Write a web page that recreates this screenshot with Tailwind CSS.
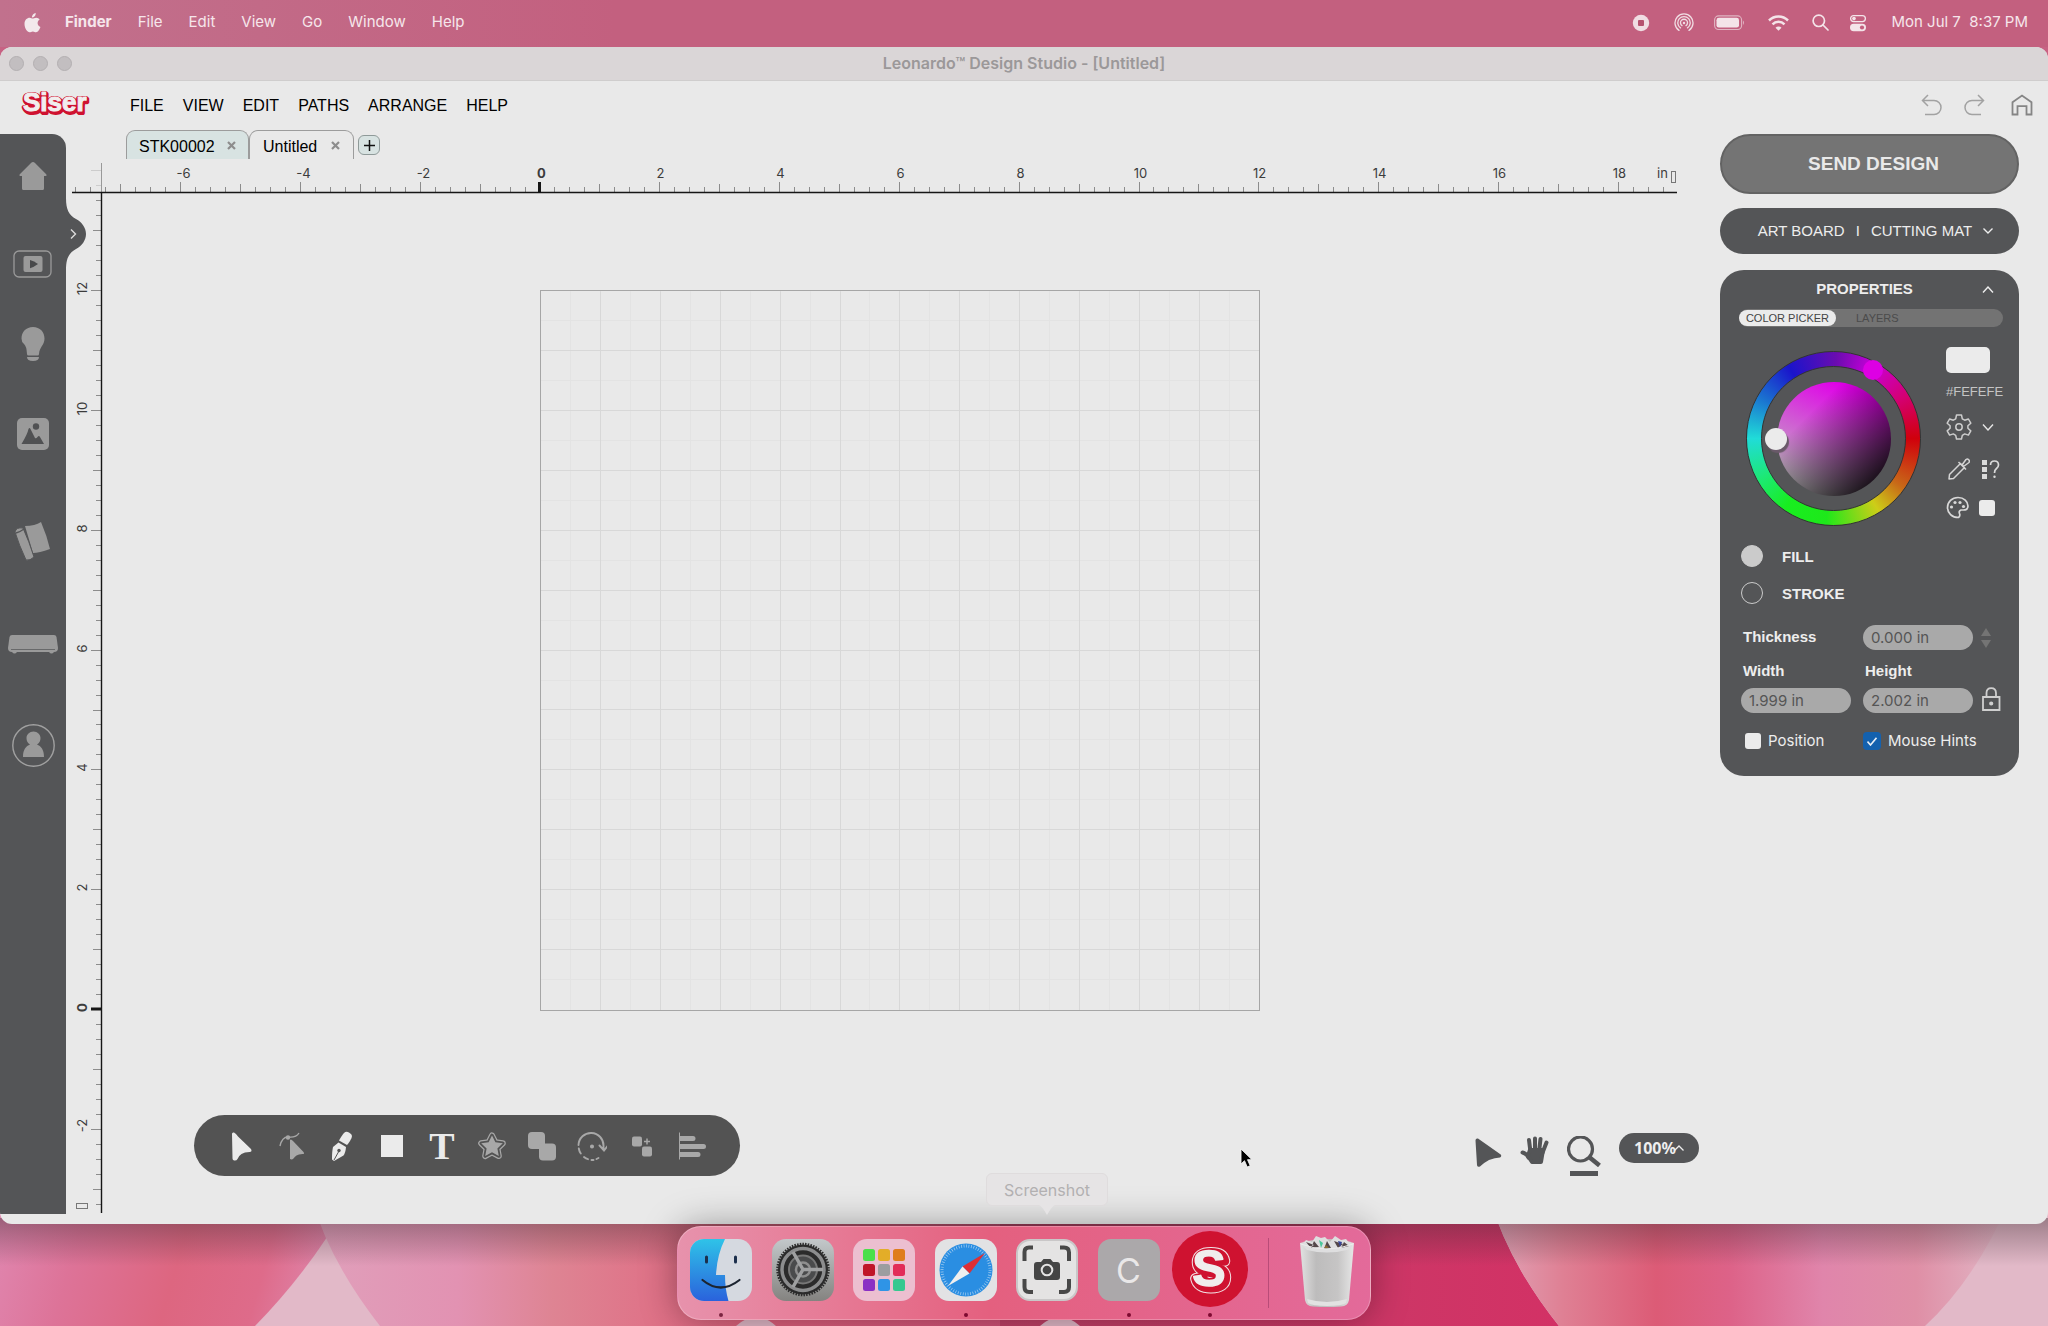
<!DOCTYPE html>
<html lang="en">
<head>
    <meta charset="UTF-8">
    <meta name="viewport" content="width=device-width, initial-scale=1.0">
    <title>Leonardo Design Studio - [Untitled]</title>
    <script src="https://cdn.jsdelivr.net/npm/@tailwindcss/browser@4"></script>
</head>
<body class="relative flex h-screen flex-col overflow-hidden bg-[#cf3365] font-['Liberation_Sans',Arial,sans-serif] text-black">

    <!-- Wallpaper -->
    <svg class="absolute inset-0 h-full w-full" viewBox="0 0 2048 1326" preserveAspectRatio="none" aria-hidden="true">
        <defs>
            <linearGradient id="petalLeft" x1="0" x2="1" y1="0" y2="0.1">
                <stop offset="0" stop-color="#e087b0"/><stop offset=".25" stop-color="#dd7398"/>
                <stop offset=".55" stop-color="#dd6680"/><stop offset=".8" stop-color="#de6b8a"/><stop offset="1" stop-color="#df88ae"/>
            </linearGradient>
            <linearGradient id="petalMid" x1="0" x2="1" y1="0" y2="0">
                <stop offset="0" stop-color="#e0a0bb"/><stop offset=".2" stop-color="#e292b2"/><stop offset=".33" stop-color="#de8493"/>
                <stop offset=".6" stop-color="#e0627d"/><stop offset="1" stop-color="#d05078"/>
            </linearGradient>
            <linearGradient id="petalRight" x1="0" x2="1" y1="0" y2="0">
                <stop offset="0" stop-color="#e0a5b8"/><stop offset=".14" stop-color="#df8094"/><stop offset=".32" stop-color="#dc5b76"/>
                <stop offset=".46" stop-color="#dd6288"/><stop offset=".64" stop-color="#e085ab"/><stop offset=".82" stop-color="#df8fa6"/><stop offset="1" stop-color="#e2b9c8"/>
            </linearGradient>
            <linearGradient id="deep" x1="0" x2="1" y1="0" y2="0">
                <stop offset="0" stop-color="#c04268"/><stop offset="1" stop-color="#d43065"/>
            </linearGradient>
            <linearGradient id="windowShade" x1="0" x2="0" y1="0" y2="1">
                <stop offset="0" stop-color="#3c2a30" stop-opacity=".42"/><stop offset="1" stop-color="#3c2a30" stop-opacity="0"/>
            </linearGradient>
        </defs>
        <rect y="1200" width="600" height="126" fill="#e2b9c8"/>
        <path d="M0 1200H350Q310 1270 255 1326H0Z" fill="url(#petalLeft)"/>
        <path d="M312 1200Q330 1262 380 1326H1040V1200Z" fill="url(#petalMid)"/>
        <rect x="1000" y="1200" width="600" height="126" fill="url(#deep)"/>
        <path d="M736 1326q20-18 40 0zM1040 1326q20-18 40 0z" fill="#e2b9c8"/>
        <path d="M1490 1200Q1510 1265 1559 1326H2048V1200Z" fill="#e2b9c8"/>
        <path d="M1490 1200Q1510 1265 1559 1326H1925Q1975 1280 2010 1200Z" fill="url(#petalRight)"/>
        <rect y="1218" width="2048" height="48" fill="url(#windowShade)"/>
        <rect width="2048" height="80" fill="#c76283"/>
    </svg>

    <!-- Menu bar -->
    <header class="relative flex h-[47px] shrink-0 items-center bg-linear-to-r from-[#c1718d] via-[#c3607f] via-30% to-[#c3607f] pr-5 pl-6 pb-0.5 font-[Inter,sans-serif] text-[15px] text-[#f6e6eb]">
        <svg class="mr-6 h-5 w-[17px]" viewBox="0 0 17 20" fill="#f3e9ec" aria-label="Apple"><path d="M11.7 0c.2 1.400-.4 2.500-1.100 3.300-.8.900-1.700 1.400-2.700 1.300-.1-1.200.4-2.300 1.100-3.100C9.700.7 10.800.1 11.700 0zM8.600 5.600c.8 0 1.900-.9 3.600-.9 1.500 0 2.800.8 3.500 1.900-3.100 1.900-2.600 6.100.7 7.400-.8 2.300-2.400 5.200-4.300 5.200-1.300 0-1.700-.8-3.300-.8-1.500 0-2 .8-3.200.8C3.300 19.200.5 15.200.5 10.900c0-4 2.600-6.200 5.200-6.200 1.400 0 2.300.9 2.900.9z"/></svg>
        <nav class="flex gap-[26px]">
            <a href="#" class="font-bold">Finder</a>
            <a href="#">File</a>
            <a href="#">Edit</a>
            <a href="#">View</a>
            <a href="#">Go</a>
            <a href="#">Window</a>
            <a href="#">Help</a>
        </nav>
        <div class="ml-auto flex items-center">
            <svg class="mr-6 h-[18px] w-[18px]" viewBox="0 0 18 18"><circle cx="9" cy="9" r="8.200" fill="#f0dde3"/><rect x="6" y="6" width="6" height="6" rx="1" fill="#b5526f"/></svg>
            <svg class="mr-5 h-5 w-5" viewBox="0 0 20 20" fill="none" stroke="#f0dde3" stroke-width="1.300" stroke-linecap="round"><path d="M5 17.400a9 9 0 1 1 10 0M6.500 14.900a6.200 6.200 0 1 1 7 0M8 12.600a3.500 3.500 0 1 1 4 0"/><circle cx="10" cy="10" r="1.200" fill="#f0dde3" stroke="none"/></svg>
            <svg class="mr-[23px] h-4 w-[31px]" viewBox="0 0 31 16"><rect x=".6" y=".9" width="27" height="13.600" rx="4" fill="none" stroke="#e0b4c2" stroke-width="1.100"/><rect x="2.500" y="2.800" width="22.500" height="9.800" rx="2.400" fill="#f4e4e9"/><path d="M29 5.500q2 2.200 0 4.400z" fill="#e0b4c2"/></svg>
            <svg class="mr-[23px] h-4 w-[21px]" viewBox="0 0 21 16" fill="none" stroke="#f4e4e9" stroke-width="2.500"><path d="M1 5.500a13.500 13.500 0 0 1 19 0M4.500 9.300a8.500 8.500 0 0 1 12 0"/><path d="M10.500 15.800l-3-3.100a4.200 4.200 0 0 1 6 0z" fill="#f4e4e9" stroke="none"/></svg>
            <svg class="mr-5 h-[17px] w-[17px]" viewBox="0 0 17 17" fill="none" stroke="#f4e4e9" stroke-width="1.700" stroke-linecap="round"><circle cx="6.800" cy="6.800" r="5.700"/><path d="M11 11l5 5"/></svg>
            <svg class="mr-6 h-[18px] w-[18px]" viewBox="0 0 18 18"><rect x="1.600" y="1.600" width="14.800" height="6" rx="3" fill="none" stroke="#f4e4e9" stroke-width="1.300"/><circle cx="5" cy="4.600" r="1.800" fill="#f4e4e9"/><rect x="1" y="9.800" width="16" height="7.400" rx="3.700" fill="#f4e4e9"/><circle cx="13" cy="13.500" r="2.100" fill="#c3607f"/></svg>
            <span class="whitespace-pre">Mon Jul 7  8:37 PM</span>
        </div>
    </header>

    <!-- Application window -->
    <main class="relative mb-[102px] flex min-h-0 flex-1 flex-col overflow-hidden rounded-xl bg-[#e9e9e9]">
        <div class="relative flex h-[34px] shrink-0 items-center justify-center border-b border-[#cfcdcd] bg-[#dad6d7]">
            <div class="absolute left-[9px] flex gap-[9px]">
                <span class="h-[15px] w-[15px] rounded-full border border-[#b3afb1] bg-[#c2bec0]"></span>
                <span class="h-[15px] w-[15px] rounded-full border border-[#b3afb1] bg-[#c2bec0]"></span>
                <span class="h-[15px] w-[15px] rounded-full border border-[#b3afb1] bg-[#c2bec0]"></span>
            </div>
            <h1 class="pb-0.5 font-[Inter,sans-serif] text-[16px] font-semibold text-[#9b9899]">Leonardo™ Design Studio - [Untitled]</h1>
        </div>

        <div class="flex h-[49px] shrink-0 items-center pr-[15px] pl-[18px]">
            <svg class="mb-1.5 h-8 w-[76px]" viewBox="0 0 76 32" font-family="Liberation Sans, Arial, sans-serif" font-weight="bold" font-size="26" stroke-linejoin="round">
                <g fill="#cf1230" stroke="#cf1230" stroke-width="4"><text x="6" y="26">Siser</text><text x="5" y="25">Siser</text></g>
                <text x="5" y="24" fill="#f1eeee" stroke="#f1eeee" stroke-width="1">Siser</text>
            </svg>
            <nav class="ml-9 flex gap-[19px] text-[16px]">
                <a href="#">FILE</a>
                <a href="#">VIEW</a>
                <a href="#">EDIT</a>
                <a href="#">PATHS</a>
                <a href="#">ARRANGE</a>
                <a href="#">HELP</a>
            </nav>
            <div class="mb-0.5 ml-auto flex items-center">
                <button aria-label="Undo" class="mr-5"><svg class="h-[22px] w-[22px]" viewBox="0 0 22 22" fill="none" stroke="#a2a2a2" stroke-width="1.500"><path d="M7 1L1.500 6.500 7 12M1.500 6.500H13a7 7 0 0 1 0 14H4"/></svg></button>
                <button aria-label="Redo" class="mr-[26px]"><svg class="h-[22px] w-[22px]" viewBox="0 0 22 22" fill="none" stroke="#a2a2a2" stroke-width="1.500"><path d="M15 1l5.500 5.500L15 12M20.500 6.500H9a7 7 0 0 0 0 14h9"/></svg></button>
                <button aria-label="Home"><svg class="h-[22px] w-[22px]" viewBox="0 0 22 22" fill="none" stroke="#858585" stroke-width="1.800"><path d="M1.500 8.300L11 1.500l9.500 6.800v12.200h-5v-8.300h-9v8.300h-5z"/></svg></button>
            </div>
        </div>

        <div class="flex min-h-0 flex-1">
            <!-- Left sidebar -->
            <aside class="relative mt-1 mb-[10px] flex w-[66px] shrink-0 flex-col items-center rounded-tr-[14px] bg-[#545557] pt-[28px]">
                <svg class="absolute top-[64px] left-[65px] h-[72px] w-[22px]" viewBox="0 0 22 72"><path d="M0 0H1C1 12 4 17 11 21C17 24 21 30 21 36C21 42 17 48 11 51C4 55 1 60 1 72H0Z" fill="#545557"/></svg>
                <button aria-label="Expand panel" class="absolute top-[94px] left-[69px]"><svg class="h-3 w-2" viewBox="0 0 8 12" fill="none" stroke="#dcdcdc" stroke-width="1.400"><path d="M2 1.500L6.500 6 2 10.500"/></svg></button>
                <button aria-label="Home"><svg class="h-7 w-7" viewBox="0 0 28 28" fill="#9a9a9a"><path d="M14 0q1 0 2 1l11 11q1.500 2-.5 2H25v12.500q0 1.500-1.500 1.500h-19Q3 28 3 26.500V14H1.500q-2 0-.5-2L12 1q1-1 2-1z"/></svg></button>
                <button aria-label="Videos" class="mt-[60px]"><svg class="h-7 w-10" viewBox="0 0 40 28"><rect x="1" y="1" width="37" height="26" rx="5" fill="none" stroke="#9a9a9a" stroke-width="1.300"/><rect x="10.500" y="6" width="19" height="16" rx="2" fill="#9a9a9a"/><path d="M17 10q4 1 8 4-4 3-8 4.200z" fill="#48494b"/></svg></button>
                <button aria-label="Ideas" class="mt-[49px]"><svg class="h-[34px] w-6" viewBox="0 0 24 34" fill="#9a9a9a"><path d="M12 0c7 0 11.500 5 11.500 11.500 0 7-5 8-5.500 15.500q0 1.500-1.500 1.500h-9Q6 28.500 6 27 5.500 19 3 17 .5 15 .5 11.500C.5 5 5 0 12 0zM6 30h12q0 4-6 4t-6-4z"/></svg></button>
                <button aria-label="Images" class="mt-[57px]"><svg class="h-8 w-8" viewBox="0 0 32 32"><rect width="32" height="32" rx="5" fill="#9a9a9a"/><path d="M4.500 26q6-10 7-15 1-2 2 0l4.500 9q1 1 2.500-1t2.500 0l4 7z" fill="#505153"/><circle cx="19" cy="8.500" r="3.200" fill="#505153"/></svg></button>
                <button aria-label="Materials" class="mt-[71px]"><svg class="h-10 w-9" viewBox="0 0 36 40"><path d="M10 5Q20 5 26 1q6 14 9 27-11 4-17 4z" fill="#9a9a9a"/><path d="M0 11Q1 6 8 7q6 13 11 29-4 4-8 3Q4 24 0 11z" fill="#9a9a9a" stroke="#545557"/><path d="M1 12q4-1 8-4" fill="none" stroke="#545557" stroke-width="1.300"/></svg></button>
                <button aria-label="Machine" class="mt-[74px]"><svg class="h-5 w-[50px]" viewBox="0 0 50 20"><path d="M4 0h42q2 0 2.500 2L50 13q0 4-4 4H4q-4 0-4-4L1.500 2Q2 0 4 0z" fill="#9a9a9a"/><path d="M3 14.500h44" stroke="#68696a"/><path d="M4 17h5q-2.500 3-5 0zm37 0h5q-2.500 3-5 0z" fill="#9a9a9a"/></svg></button>
                <button aria-label="Account" class="mt-[69px]"><svg class="h-[43px] w-[43px]" viewBox="0 0 43 43"><circle cx="21.500" cy="21.500" r="20.700" fill="none" stroke="#a0a0a0" stroke-width="1.400"/><path d="M21.500 7.500c4 0 7 3 7 6.500 0 3-1 5-3.500 6.500 4 1.500 7 5 7 12.500H11c0-7.500 3-11 7-12.500-2.500-1.500-3.500-3.500-3.500-6.500 0-3.500 3-6.500 7-6.500z" fill="#9a9a9a"/></svg></button>
            </aside>

            <!-- Workspace -->
            <section class="relative flex min-w-0 flex-1 flex-col">
                <div class="flex h-[29px] shrink-0 pl-[60px] text-[16px]">
                    <button class="flex w-[123px] items-center rounded-t-[9px] border border-b-0 border-[#9c9c9c] bg-[#d8e3e2] pt-1 pl-3">STK00002<svg class="mb-1 ml-3 h-[9px] w-[9px]" viewBox="0 0 9 9" stroke="#8d8d8d" stroke-width="2.200"><path d="M1 1l7 7M8 1L1 8"/></svg></button>
                    <button class="flex w-[105px] items-center rounded-t-[9px] border border-b-0 border-[#9c9c9c] pt-1 pl-[13px]">Untitled<svg class="mb-1 ml-[14px] h-[9px] w-[9px]" viewBox="0 0 9 9" stroke="#8d8d8d" stroke-width="2.200"><path d="M1 1l7 7M8 1L1 8"/></svg></button>
                    <button aria-label="New tab" class="mt-[5px] ml-1 flex h-5 w-[22px] items-center justify-center rounded-md border border-[#8f9a99] bg-[#d8e3e2]"><svg class="h-[11px] w-[11px]" viewBox="0 0 11 11" stroke="#111" stroke-width="1.500"><path d="M5.500 0v11M0 5.500h11"/></svg></button>
                </div>

                <svg id="canvas" class="min-h-0 w-full flex-1 font-[Inter,sans-serif] text-[13px]"></svg>

                <!-- Floating tools -->
                <div class="absolute right-[21px] bottom-[48px] left-[128px] flex items-end justify-between">
                    <div class="flex h-[61px] items-center gap-5 rounded-full bg-[#535353] px-[33px]">
                        <button aria-label="Select"><svg class="h-[30px] w-[30px]" viewBox="0 0 30 30" fill="#ebebeb"><path d="M5 3q0-2 2-1.500 2 1 4 4L24 18q1.500 3-1.500 3-5 0-8 2-3 2-4 5-1 2-3.500 1.500-1.500-.5-1.500-2z"/></svg></button>
                        <button aria-label="Edit nodes"><svg class="h-[30px] w-[30px]" viewBox="0 0 30 30"><path d="M3 15Q5 6 11 6q8 1 11-4" fill="none" stroke="#a8a8a8" stroke-width="1.400"/><circle cx="11" cy="6.500" r="2.200" fill="#a8a8a8"/><path d="M13 9q1-1.500 3 1l10.500 11q1.500 2-1 2-4 0-6 1.500t-3 3Q15 29 13 28z" fill="#a8a8a8"/></svg></button>
                        <button aria-label="Pen"><svg class="h-[30px] w-[30px]" viewBox="0 0 30 30"><path d="M17 2q2-2 5-.5T25 5q0 2-2 5t-3 4l-8-4.500Q15 4 17 2z" fill="#ebebeb"/><path d="M11.500 11.500l7.500 4.500q-.5 6-2.500 8.500L7 30l-2-1.500Q5 20 6 16z" fill="#ebebeb"/><path d="M7 29l5-9" stroke="#535353"/><circle cx="12" cy="19.500" r="1.700" fill="#535353"/></svg></button>
                        <button aria-label="Rectangle"><svg class="h-[30px] w-[30px]" viewBox="0 0 30 30"><rect x="4" y="4" width="22" height="22" fill="#ebebeb"/></svg></button>
                        <button aria-label="Text" class="h-[30px] w-[30px] text-center font-['Liberation_Serif',serif] text-[38px] leading-[30px] font-bold text-[#ebebeb]">T</button>
                        <button aria-label="Shapes"><svg class="h-[30px] w-[30px]" viewBox="0 0 30 30" stroke-linejoin="round"><path d="M15 4.500l3.400 6.800 7.400 1-5.400 5.200 1.400 7.500-6.800-3.700-6.800 3.700 1.400-7.500-5.400-5.200 7.400-1z" fill="#a8a8a8" stroke="#a8a8a8" stroke-width="6"/><path d="M15 4.500l3.400 6.800 7.400 1-5.400 5.200 1.400 7.500-6.800-3.700-6.800 3.700 1.400-7.500-5.400-5.200 7.400-1z" fill="#a8a8a8" stroke="#535353" stroke-width="3.600"/><path d="M15 4.500l3.400 6.800 7.400 1-5.400 5.200 1.400 7.500-6.800-3.700-6.800 3.700 1.400-7.500-5.400-5.200 7.400-1z" fill="#a8a8a8"/></svg></button>
                        <button aria-label="Combine"><svg class="h-[30px] w-[30px]" viewBox="0 0 30 30" fill="#a8a8a8"><rect x="1" y="1" width="17" height="17" rx="4"/><rect x="12" y="12.500" width="17" height="17" rx="4"/></svg></button>
                        <button aria-label="Rotate"><svg class="h-[30px] w-[30px]" viewBox="0 0 30 30" fill="none" stroke="#a8a8a8" stroke-width="1.900" stroke-linecap="round"><path d="M1.500 14A12.500 12.500 0 0 1 26.500 15v4M22.500 14.500l4.500 5 4-5"/><path d="M1.800 17.500q.5 3 2 5M7 26q2 1.700 4 2.200M14.500 29h2M19.500 28l2-1"/><circle cx="15" cy="15.500" r="1.100" fill="#a8a8a8"/></svg></button>
                        <button aria-label="Duplicate"><svg class="h-[30px] w-[30px]" viewBox="0 0 30 30" fill="#a8a8a8"><rect x="5" y="5.500" width="10" height="10" rx="2"/><rect x="15" y="15.500" width="10" height="10" rx="2"/><path d="M20 7.500v6M17 10.500h6" stroke="#a8a8a8" stroke-width="1.500"/></svg></button>
                        <button aria-label="Align"><svg class="h-[30px] w-[30px]" viewBox="0 0 30 30" fill="#a8a8a8"><path d="M2 1.500h1v27H2z"/><path d="M3 5h13q2.500 0 2.500 2.500T16 10H3zm0 8h23.500q2.500 0 2.500 2.500T26.500 18H3zm0 8h18q2.500 0 2.500 2.500T21 26H3z"/></svg></button>
                    </div>
                    <div class="flex items-start gap-[18px]">
                        <button aria-label="Pointer"><svg class="mt-[5px] h-[29px] w-[27px]" viewBox="0 0 27 29" fill="#545557"><path d="M.5 2.500Q.5 0 3 .5L25 16q2.500 1.500 0 3.500-5 0-11 2.500Q10 24 5 28.500q-3 1-3-1.500z"/></svg></button>
                        <button aria-label="Pan"><svg class="mt-[3px] h-[29px] w-[29px]" viewBox="0 0 29 29" fill="none" stroke="#545557" stroke-width="4" stroke-linecap="round" stroke-linejoin="round"><path d="M9 4l1.500 12M15 2.500V16M20.500 3L19 16M26.500 6.500L22 18M2.500 16.500q4 1 6 5" /><path d="M10 14h13l-2 12H12L8 20z" fill="#545557"/></svg></button>
                        <button aria-label="Zoom" class="flex flex-col items-center gap-1"><svg class="mt-[3px] h-[31px] w-[34px]" viewBox="0 0 34 31" fill="none" stroke="#545557"><circle cx="13.500" cy="13" r="12" stroke-width="3.200"/><path d="M21.500 20.500l11 9" stroke-width="4.500"/></svg><span class="h-[5px] w-7 bg-[#545557]"></span></button>
                        <button class="flex h-[30px] w-20 items-center justify-center rounded-full bg-[#545557] font-['Noto_Sans',sans-serif] text-[16px] font-bold text-[#eeeeee]">100%<svg class="-ml-0.5 h-[6px] w-[10px]" viewBox="0 0 10 6" fill="none" stroke="#eee" stroke-width="1.300"><path d="M.5 5.500L5 1l4.500 4.500"/></svg></button>
                    </div>
                </div>
            </section>

            <!-- Right panel -->
            <aside class="mt-1 mr-[29px] flex w-[299px] shrink-0 flex-col text-[15px] text-[#ededed]">
                <button class="h-[60px] rounded-full border-2 border-[#636363] bg-[#747474] pl-2 text-[19px] font-bold text-[#e9e9e9]">SEND DESIGN</button>
                <button class="mt-[14px] flex h-[46px] items-center justify-center gap-[11px] rounded-full bg-[#545557] pl-3"><span>ART BOARD</span><span>I</span><span>CUTTING MAT</span><svg class="h-[6px] w-[10px]" viewBox="0 0 10 6" fill="none" stroke="#eee" stroke-width="1.400"><path d="M.5 .5L5 5 9.500.5"/></svg></button>

                <div class="mt-4 rounded-[24px] bg-[#545557] pb-7 pl-[19px]">
                    <div class="flex h-[39px] items-center pr-[25px]">
                        <h2 class="flex-1 pl-2 text-center font-bold">PROPERTIES</h2>
                        <button aria-label="Collapse"><svg class="h-[7px] w-3" viewBox="0 0 12 7" fill="none" stroke="#eee" stroke-width="1.400"><path d="M1 6.500L6 1l5 5.500"/></svg></button>
                    </div>
                    <div class="mr-4 flex h-[18px] items-center rounded-full bg-[#737373] text-[11px]">
                        <button class="h-4 w-[97px] rounded-full bg-[#ebebeb] leading-4 text-[#444]">COLOR PICKER</button>
                        <button class="ml-5 text-[#4b4b4b]">LAYERS</button>
                    </div>

                    <div class="mt-5 flex">
                        <div class="relative mt-1 ml-[7px] h-[175px] w-[175px] shrink-0 rounded-full border border-[#333] bg-[conic-gradient(from_90deg,#d0000c_0deg,#c86818_35deg,#cdcd18_58deg,#1ee81a_95deg,#18ee20_125deg,#1de878_152deg,#20dcd8_180deg,#1a70d0_210deg,#1a14cc_238deg,#6a0cb0_272deg,#c800d8_298deg,#d40070_330deg,#d0000c_360deg)] p-[14px]">
                            <div class="flex h-full w-full items-center justify-center rounded-full border border-[#333] bg-[#545557]">
                                <div class="h-[114px] w-[114px] rounded-full bg-[linear-gradient(135deg,#0000_28%,#000d_86%),linear-gradient(205deg,#e000e8_15%,#c0b4c0_85%)]"></div>
                            </div>
                            <span class="absolute top-2 left-[116px] h-5 w-5 rounded-full bg-[#dd00e4]"></span>
                            <span class="absolute top-[76px] left-[18px] h-[22px] w-[22px] rounded-full bg-[#ebebeb] shadow-[2px_3px_1px_#6a5a6a]"></span>
                        </div>
                        <div class="ml-[25px]">
                            <div class="h-[26px] w-11 rounded-[5px] bg-[#ebebeb]"></div>
                            <p class="mt-[11px] h-4 text-[13px] leading-4 text-[#c4c4c4]">#FEFEFE</p>
                            <div class="mt-[14px] flex items-center gap-[10px]">
                                <button aria-label="Settings"><svg class="h-[26px] w-[26px]" viewBox="0 0 26 26" fill="none" stroke="#cdcdcd" stroke-width="1.500" stroke-linejoin="round"><path d="M10.500 1h5l.8 3.800 2.400 1.400 3.700-1.200 2.400 4.200-2.900 2.600v2.500l2.900 2.600-2.400 4.200-3.700-1.200-2.400 1.400-.8 3.700h-5l-.8-3.700-2.400-1.400-3.700 1.200-2.400-4.200 2.900-2.600v-2.500L1.200 9.200 3.600 5l3.700 1.200 2.400-1.400z"/><circle cx="13" cy="13" r="3.200"/></svg></button>
                                <svg class="h-[7px] w-3" viewBox="0 0 12 7" fill="none" stroke="#e5e5e5" stroke-width="1.400"><path d="M1 .5L6 6l5-5.500"/></svg>
                            </div>
                            <div class="mt-[18px] flex items-center gap-3 pl-0.5">
                                <button aria-label="Eyedropper"><svg class="h-[22px] w-[22px]" viewBox="0 0 22 22" fill="none" stroke="#d5d5d5" stroke-width="1.500" stroke-linejoin="round"><path d="M1 21l.5-4.500L12.500 5.500l4 4L5.500 20.500zM10.500 4l7.500 7.500M14 7l4-5.500q1.500-1 2.700.2T21 4.500L15.500 8.500"/></svg></button>
                                <svg class="h-[19px] w-[18px]" viewBox="0 0 18 19" fill="#dadada"><path d="M0 0h5v5H0zm0 7h5v5H0zm0 7h5v5H0z"/><path d="M8.500 5Q8.500 1 12.500 1t4 4q0 2-2 3.500T12.500 13" fill="none" stroke="#dadada" stroke-width="1.700"/><circle cx="12.500" cy="16.700" r="1.200"/></svg>
                            </div>
                            <div class="mt-4 flex items-center gap-[10px]">
                                <button aria-label="Palette"><svg class="h-[23px] w-[23px]" viewBox="0 0 23 23" fill="none" stroke="#d8d8d8" stroke-width="1.700"><path d="M12 1.500C18 1.500 22 5.500 22 10q0 4-4.500 4H15q-2.500 1-1.500 3.500t-1 4C6 21.500 1.500 17 1.500 11.500S6 1.500 12 1.500z"/><g fill="#d8d8d8" stroke="none"><circle cx="9" cy="6.500" r="1.600"/><circle cx="14" cy="6.500" r="1.600"/><circle cx="5.500" cy="11" r="1.600"/><circle cx="17.500" cy="10.500" r="1.600"/></g></svg></button>
                                <button aria-label="Swatch" class="h-4 w-4 rounded-[3px] bg-[#ebebeb]"></button>
                            </div>
                        </div>
                    </div>

                    <div class="mt-[19px] flex flex-col gap-[15px] pl-0.5 font-bold">
                        <label class="flex h-[22px] items-center gap-[19px]"><input type="radio" name="paint" checked class="h-[22px] w-[22px] appearance-none rounded-full border border-[#cbcbcb] checked:bg-[#cbcbcb]"><span class="pt-0.5">FILL</span></label>
                        <label class="flex h-[22px] items-center gap-[19px]"><input type="radio" name="paint" class="h-[22px] w-[22px] appearance-none rounded-full border border-[#cbcbcb] checked:bg-[#cbcbcb]"><span class="pt-0.5">STROKE</span></label>
                    </div>

                    <div class="mt-[21px] grid grid-cols-[122px_118px_1fr] items-center pl-0.5">
                        <label for="thickness" class="pl-0.5 font-bold">Thickness</label>
                        <input id="thickness" type="text" value="0.000 in" class="h-[25px] w-[110px] rounded-full bg-[#a9a9a9] pl-2 font-[Inter,sans-serif] text-[#555]">
                        <svg class="h-5 w-3" viewBox="0 0 12 20" fill="#747474"><path d="M5 0l5 8H0zM5 20l5-8H0z"/></svg>

                        <label for="width" class="mt-[11px] h-5 pl-0.5 leading-5 font-bold">Width</label>
                        <label for="height" class="col-span-2 mt-[11px] h-5 pl-0.5 leading-5 font-bold">Height</label>

                        <input id="width" type="text" value="1.999 in" class="mt-[7px] h-[25px] w-[110px] rounded-full bg-[#a9a9a9] pl-2 font-[Inter,sans-serif] text-[#555]">
                        <input id="height" type="text" value="2.002 in" class="mt-[7px] h-[25px] w-[110px] rounded-full bg-[#a9a9a9] pl-2 font-[Inter,sans-serif] text-[#555]">
                        <button aria-label="Lock ratio"><svg class="mt-1 h-6 w-5" viewBox="0 0 20 24" fill="none" stroke="#cfcfcf" stroke-width="1.800"><path d="M2 10h16.500v13H2zM5.500 10V6q0-4.800 4.700-4.800T15 6v4"/><circle cx="10.200" cy="16.500" r="1.200" fill="#cfcfcf"/></svg></button>
                    </div>

                    <div class="mt-[17px] grid h-[18px] grid-cols-[122px_1fr] items-center pl-0.5 font-[Inter,sans-serif]">
                        <label class="flex items-center gap-[7px] pl-1"><input type="checkbox" class="h-4 w-4 appearance-none rounded-[3px] bg-[#ebebeb]">Position</label>
                        <label class="relative flex items-center gap-[7px]"><input type="checkbox" checked class="h-[18px] w-[18px] appearance-none rounded-[4px] bg-[#1461ae]"><svg class="pointer-events-none absolute left-[4px] h-[9px] w-[10px]" viewBox="0 0 10 9" fill="none" stroke="#e8eef5" stroke-width="1.600"><path d="M.5 4.500L3.500 8 9.500.8"/></svg>Mouse Hints</label>
                    </div>
                </div>
            </aside>
        </div>
    </main>

    <!-- Mouse cursor -->
    <svg class="absolute top-[1148px] left-[1240px] h-[21px] w-[14px]" viewBox="0 0 14 21"><path d="M1 1v15l3.500-3.300L7.200 19l3-1.300-2.700-6H12z" fill="#000" stroke="#f3f3f3" stroke-width=".9"/></svg>

    <!-- Dock -->
    <footer class="absolute bottom-[6px] left-1/2 flex h-[94px] w-[694px] -translate-x-1/2 items-center rounded-[24px] border border-white/25 bg-linear-to-r from-[#e792ac] via-[#e4607f] via-45% to-[#e36a9a] px-3 shadow-[0_0_36px_rgba(0,0,0,.36)]">
        <div class="mb-[6px] flex w-[551px] justify-between">
            <button aria-label="Finder" class="relative h-[62px] w-[62px]">
                <svg viewBox="0 0 62 62" class="h-full w-full"><defs><linearGradient id="fb" x2="0" y2="1"><stop stop-color="#2fc3e8"/><stop offset="1" stop-color="#2a62dc"/></linearGradient><clipPath id="fc"><rect width="62" height="62" rx="14"/></clipPath></defs><g clip-path="url(#fc)"><rect width="62" height="62" fill="#d5d9e0"/><path d="M0 0h35q-8 16-9 36h9q0 14 3.500 26H0z" fill="url(#fb)"/></g><path d="M16.500 18v5M45.500 18v5" stroke="#1c2f4c" stroke-width="3" stroke-linecap="round"/><path d="M12.500 41q18 15 37 0" fill="none" stroke="#1c2430" stroke-width="2.200" stroke-linecap="round"/></svg>
                <span class="absolute top-[74px] left-[29px] h-1 w-1 rounded-full bg-[#7a2440]"></span>
            </button>
            <button aria-label="System Settings" class="h-[62px] w-[62px]">
                <svg viewBox="0 0 62 62" class="h-full w-full" fill="none"><defs><linearGradient id="sg" x2="0" y2="1"><stop stop-color="#c3c8ca"/><stop offset="1" stop-color="#848380"/></linearGradient></defs><rect width="62" height="62" rx="14" fill="url(#sg)"/><circle cx="31" cy="30.500" r="25" fill="#2b2b2b"/><circle cx="31" cy="30.500" r="25.500" stroke="#2b2b2b" stroke-width="2.500" stroke-dasharray="1.500 1.200"/><circle cx="31" cy="30.500" r="21" stroke="#8c8d8e" stroke-width="3.500"/><circle cx="31" cy="30.500" r="14" fill="#4a4b4c" stroke="#777" stroke-width="2"/><circle cx="31" cy="30.500" r="7" stroke="#8e8e8e" stroke-width="2.500"/><path d="M31 30.500h20M31 30.500L21 13M31 30.500L21 48" stroke="#9fa0a1" stroke-width="3.500"/></svg>
            </button>
            <button aria-label="Launchpad" class="h-[62px] w-[62px]">
                <svg viewBox="0 0 62 62" class="h-full w-full"><rect width="62" height="62" rx="14" fill="#ecbfd0"/><g><rect x="10" y="10" width="12" height="12" rx="2.500" fill="#4ae04a"/><rect x="25" y="10" width="12" height="12" rx="2.500" fill="#e3ad28"/><rect x="40" y="10" width="12" height="12" rx="2.500" fill="#df7d1c"/><rect x="10" y="25" width="12" height="12" rx="2.500" fill="#c01428"/><rect x="25" y="25" width="12" height="12" rx="2.500" fill="#9c9da0"/><rect x="40" y="25" width="12" height="12" rx="2.500" fill="#e22c58"/><rect x="10" y="40" width="12" height="12" rx="2.500" fill="#8a30c4"/><rect x="25" y="40" width="12" height="12" rx="2.500" fill="#2f94e6"/><rect x="40" y="40" width="12" height="12" rx="2.500" fill="#36c890"/></g></svg>
            </button>
            <button aria-label="Safari" class="relative h-[62px] w-[62px]">
                <svg viewBox="0 0 62 62" class="h-full w-full"><rect width="62" height="62" rx="14" fill="#e2e2e4"/><circle cx="31" cy="31" r="26.500" fill="#2a8ee2"/><circle cx="31" cy="31" r="24" fill="none" stroke="#a8cff0" stroke-width="3" stroke-dasharray=".7 1.800"/><path d="M50 14L27.500 27.500l7 7z" fill="#dd2f35"/><path d="M13 47l14.500-19.500 7 7z" fill="#efefef"/></svg>
                <span class="absolute top-[74px] left-[29px] h-1 w-1 rounded-full bg-[#7d0a30]"></span>
            </button>
            <div class="relative h-[62px] w-[62px]">
                <button aria-label="Screenshot" class="h-[62px] w-[62px]"><svg viewBox="0 0 62 62" class="h-full w-full" fill="none"><rect x="1" y="1" width="60" height="60" rx="13" fill="#e4e3e3" stroke="#c9c7c8" stroke-width="2"/><path d="M8.500 22v-9q0-4.500 4.500-4.500h4M44 8.500h4q5 0 5 5V22M53 40v8q0 5-5 5h-5M17 53h-4q-4.500 0-4.500-5v-8" stroke="#484848" stroke-width="4"/><path d="M18 26q0-3 3-3h4l2.500-3h7l2.500 3h4q3 0 3 3v12q0 3-3 3H21q-3 0-3-3z" fill="#454545"/><circle cx="31" cy="31" r="5.300" stroke="#e4e3e3" stroke-width="2"/></svg></button>
                <div class="absolute bottom-[95px] left-1/2 flex h-[33px] w-[122px] -translate-x-1/2 items-center justify-center rounded-md border border-[#dfdcdd] bg-[#e6e4e5] font-[Inter,sans-serif] text-[16px] text-[#b2b0b1]">Screenshot
                    <svg class="absolute top-[31px] left-[52px] h-[11px] w-4" viewBox="0 0 16 11"><path d="M0 0q3 1 8 10 5-9 8-10z" fill="#e6e4e5"/></svg>
                </div>
            </div>
            <div class="relative h-[62px] w-[62px]">
                <button class="h-[62px] w-[62px] rounded-[13px] bg-[#aba8aa] font-[Inter,sans-serif] text-[34px] text-[#e9e7e8]">C</button>
                <span class="absolute top-[74px] left-[29px] h-1 w-1 rounded-full bg-[#7d0a30]"></span>
            </div>
            <button aria-label="Leonardo Design Studio" class="relative h-[62px] w-[62px]">
                <svg viewBox="0 0 76 76" class="absolute -top-2 -left-[7px] h-[76px] w-[76px] max-w-none"><circle cx="38" cy="38" r="38" fill="#cf1230"/><g font-family="Liberation Sans, Arial, sans-serif" font-weight="bold" font-size="50" text-anchor="middle" stroke-linejoin="round"><text x="39" y="56.500" fill="#f2dfe2" stroke="#f2dfe2" stroke-width="11">S</text><text x="39" y="56.500" fill="#cf1230" stroke="#cf1230" stroke-width="9">S</text><text x="37" y="55" fill="#f0eded" stroke="#f0eded" stroke-width="1.500">S</text></g></svg>
                <span class="absolute top-[74px] left-[29px] h-1 w-1 rounded-full bg-[#7d0a30]"></span>
            </button>
        </div>
        <div class="ml-[27px] h-[70px] w-px bg-[#b94c78]"></div>
        <button aria-label="Trash" class="mb-1 ml-[30px]">
            <svg class="h-[72px] w-14" viewBox="0 0 56 72"><defs><linearGradient id="tg" x2="1" y2="0"><stop stop-color="#e2e2e2"/><stop offset=".3" stop-color="#bdbcbc"/><stop offset=".7" stop-color="#c6c5c5"/><stop offset="1" stop-color="#e6e6e6"/></linearGradient></defs><path d="M1 8q27-8 54 0l-5 57q-1 6-8 6.500-14 1-28 0Q7 71 6 65z" fill="url(#tg)"/><path d="M3 10l4-5 6 2 4-6 5 2 4-1 5 5 5-6 6 4 5-1 6 7-5 4q-20 5-40 0z" fill="#dededf"/><path d="M7 7l4 5 4-2zM15 6l5 6-8 1zM28 6l-3 8 7-1zM35 6l4 7 5-4zM45 7l-3 6 8-2z" fill="#55484b"/><path d="M20 5l4 3-2 5z" fill="#4cc79c"/><path d="M39 6l4 1-2 5z" fill="#37459a"/><path d="M27 10l3 3h-5z" fill="#8c6a34"/><path d="M2 9q26 10 52 0" fill="none" stroke="#ececec"/><path d="M8 64q20 6 40 0l-1 4q-4 3-19 3T9 68z" fill="#e2e2e2"/></svg>
        </button>
    </footer>

    <script>
        const UNIT = 59.9;
        const ORIGIN = { x: 473.5, y: 850 };
        const AXIS = { x: 35, y: 33 };

        const canvas = document.getElementById('canvas');

        function line(x1, y1, x2, y2, color, width = 1) {
            return `<line x1="${x1}" y1="${y1}" x2="${x2}" y2="${y2}" stroke="${color}" stroke-width="${width}"/>`;
        }

        // Tick length depends on whether the step is a quarter, a whole or an even inch
        function tickLength(step) {
            if (step % 8 === 0) return 10;
            return step % 4 === 0 ? 8 : 5;
        }

        function drawGrid() {
            let out = '';
            const left = ORIGIN.x + 1;
            const bottom = ORIGIN.y + 1;
            const size = 12 * UNIT;
            for (const [parity, color] of [[1, '#e3e3e3'], [0, '#d8d8d8']]) {
                for (let i = 1; i < 24; i++) {
                    if (i % 2 !== parity) continue;
                    const d = Math.round(i * UNIT / 2);
                    out += line(left + d, bottom - size, left + d, bottom, color);
                    out += line(left, bottom - d - .5, left + size, bottom - d - .5, color);
                }
            }
            out += `<rect x="${left}" y="${Math.floor(bottom - size) - .5}" width="${Math.round(size)}" height="${Math.round(size) + 1}" fill="none" stroke="#a6a6a6"/>`;
            return out;
        }

        function drawRulers(width, height) {
            let out = '';
            const right = width - 43;
            const bottom = height - 11;

            for (let step = -60; step < 120; step++) {
                const x = Math.round(ORIGIN.x + step * UNIT / 4) + .5;
                if (x < 8 || x > right) continue;
                out += line(x, AXIS.y - tickLength(step), x, AXIS.y, '#8c8c8c');
                if (step % 8 === 0 && x > AXIS.x + 20) {
                    // The minus sign stays left of the tick
                    out += `<text x="${x + (step < 0 ? 3 : 1)}" y="19" text-anchor="middle" fill="#3c3c3c" font-weight="${step === 0 ? 700 : 400}">${step / 4}</text>`;
                }
            }
            for (let step = -60; step < 120; step++) {
                const y = Math.round(ORIGIN.y - step * UNIT / 4) + .5;
                if (y < 8 || y > bottom) continue;
                out += line(AXIS.x - tickLength(step), y, AXIS.x, y, y < AXIS.y ? '#cccccc' : '#8c8c8c');
                if (step % 8 === 0 && y > AXIS.y + 10) {
                    out += `<text transform="translate(21 ${y - (step < 0 ? 4 : 2)}) rotate(-90)" text-anchor="middle" fill="#3c3c3c" font-weight="${step === 0 ? 700 : 400}">${step / 4}</text>`;
                }
            }

            out += line(AXIS.x + .5, 4, AXIS.x + .5, AXIS.y, '#999999');
            out += line(AXIS.x + .5, AXIS.y, AXIS.x + .5, bottom, '#161616', 1.4);
            out += line(6, AXIS.y + .5, right, AXIS.y + .5, '#161616', 1.4);
            out += line(ORIGIN.x, AXIS.y - 10, ORIGIN.x, AXIS.y, '#161616', 3);
            out += line(AXIS.x - 10, ORIGIN.y, AXIS.x, ORIGIN.y, '#161616', 3);
            out += `<text x="${right - 20}" y="19" fill="#3c3c3c">in</text>`;
            out += `<rect x="${right - 5.5}" y="12.5" width="4" height="11" fill="none" stroke="#777"/>`;
            out += `<rect x="10.5" y="${height - 20.5}" width="11" height="5" fill="none" stroke="#777"/>`;
            return out;
        }

        function draw() {
            const { width, height } = canvas.getBoundingClientRect();
            canvas.innerHTML = drawGrid() + drawRulers(width, height);
        }

        // Redraws whenever the workspace changes size, the first layout included
        new ResizeObserver(draw).observe(canvas);
        window.addEventListener('load', draw);
        draw();
    </script>
</body>
</html>
